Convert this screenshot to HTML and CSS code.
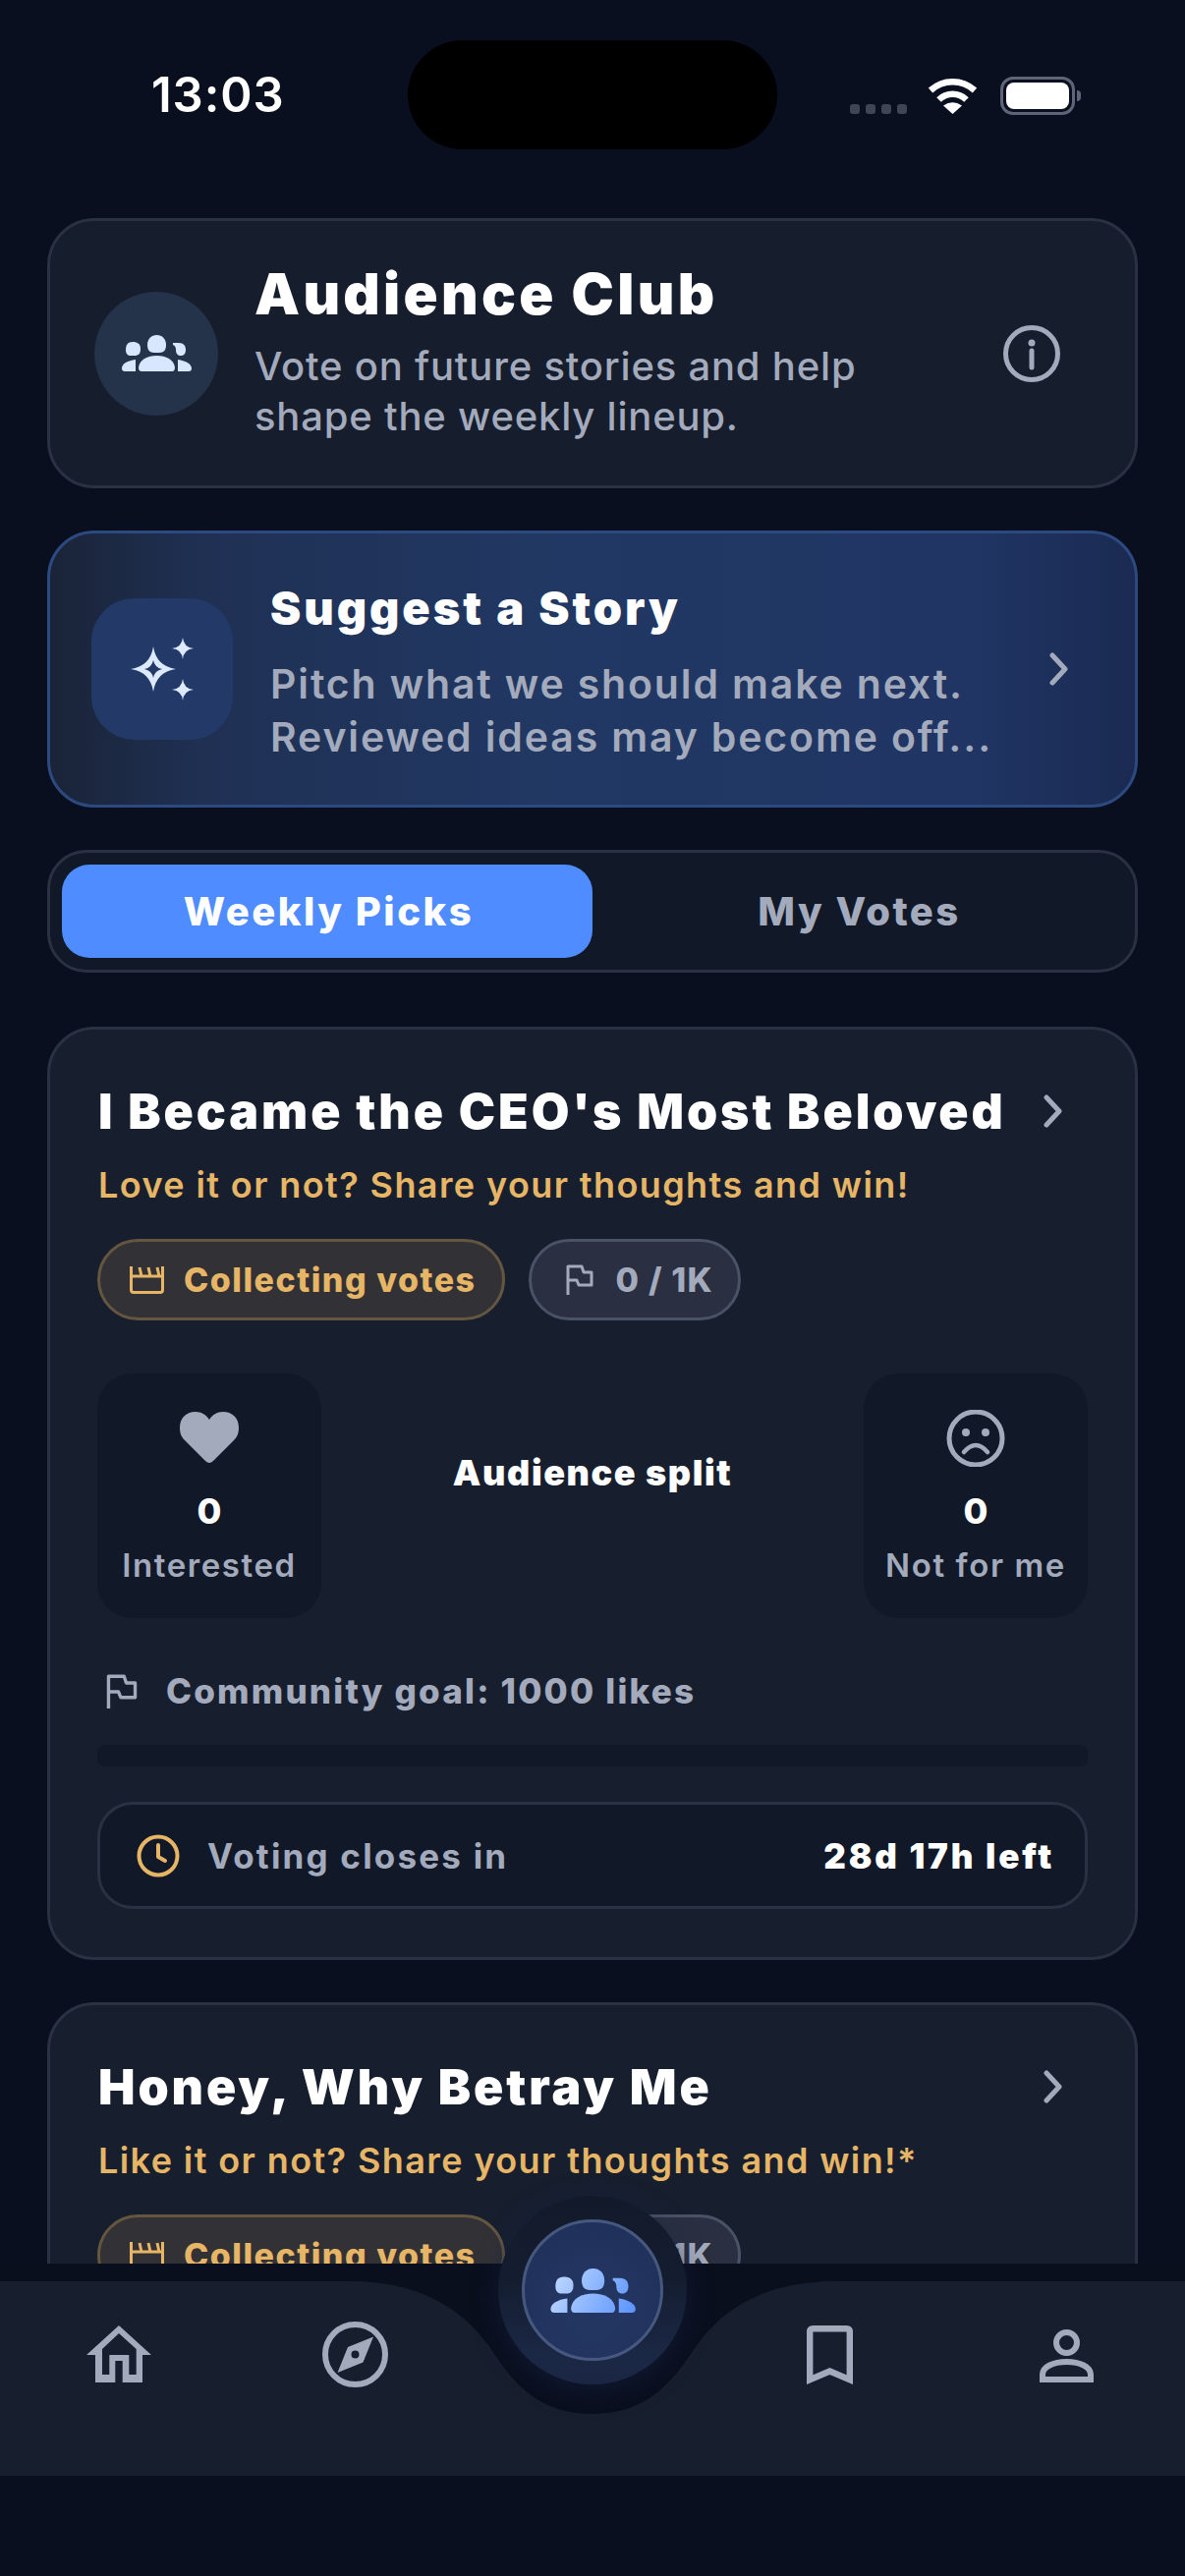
FILE: index.html
```html
<!DOCTYPE html>
<html lang="en">
<head>
  <meta charset="UTF-8" />
  <meta name="viewport" content="width=device-width, initial-scale=1" />
  <title>Audience Club</title>
  <link rel="stylesheet" href="styles.css">
</head>
<body>
  <svg class="defs" width="0" height="0" aria-hidden="true">
    <defs>
      <linearGradient id="people-glow" gradientUnits="userSpaceOnUse" x1="0" y1="0" x2="72" y2="36">
        <stop offset="0" stop-color="#c4dcff" />
        <stop offset="1" stop-color="#5b93ff" />
      </linearGradient>
      <symbol id="people" viewBox="0 0 72 37">
        <path d="M36.500 0C42 0 46 4 46 10C46 15 44 18 39 18H34C29 18 27 15 27 10C27 4 31 0 36.500 0Z" />
        <path d="M18 33C19 25 27 21 36.500 21C46 21 54 25 55 33C55 35.500 54 37 52 37H21C19 37 18 35.500 18 33Z" />
        <path d="M12 7C17 7 20 9 20 14C20 19 18 21 14 21H10C7 21 5 19 5 15C5 10 7 7 12 7Z" />
        <path d="M15 25V37H4C2 37 1 36 1 34C1 29 7 26 15 25Z" />
        <path d="M53 8H59C64 8 66 11 66 15C66 19 64 21 61 21C58 21 56 19 56 15C56 12.500 55 10.500 53 10Z" />
        <path d="M58 25C65 26 72 29 72 34C72 36 71 37 69 37H58Z" />
      </symbol>
      <symbol id="chevron" viewBox="0 0 20 34">
        <path d="M3 3L16 17L3 31" fill="none" stroke="currentColor" stroke-width="5" stroke-linecap="round" stroke-linejoin="round" />
      </symbol>
      <symbol id="clapper" viewBox="0 0 35 28">
        <path d="M1.500 0V24Q1.500 26.500 4 26.500H31Q33.500 26.500 33.500 24V0M1.500 10H33.500M10 1L12 10M19 1L21 10M28 1L30 10" fill="none" stroke="currentColor" stroke-width="3" />
      </symbol>
      <symbol id="flag" viewBox="0 0 28 31">
        <path d="M2 31V2H16L18 8H26V21H13L11 16H2" fill="none" stroke="currentColor" stroke-width="3" stroke-linejoin="round" />
      </symbol>
    </defs>
  </svg>

  <div class="phone">
    <div class="status">
      <span class="time">13:03</span>
      <div class="island"></div>
      <div class="status-icons">
        <div class="signal"><i></i><i></i><i></i><i></i></div>
        <svg class="wifi" viewBox="0 0 51 37">
          <path d="M3 13A33 33 0 0 1 48 13M11.500 22.500A20 20 0 0 1 39.500 22.500" fill="none" stroke="#fff" stroke-width="6.500" />
          <path d="M25.500 37L16 28.500Q25.500 22 35 28.500Z" fill="#fff" />
        </svg>
        <div class="battery"><div class="battery-fill"></div></div>
      </div>
    </div>

    <main class="feed">
      <section class="intro">
        <div class="avatar">
          <svg class="avatar-icon"><use href="#people" /></svg>
        </div>
        <div class="intro-text">
          <h1>Audience Club</h1>
          <p>Vote on future stories and help<br>shape the weekly lineup.</p>
        </div>
        <svg class="info" viewBox="0 0 58 58">
          <circle cx="29" cy="29" r="26.500" fill="none" stroke="currentColor" stroke-width="5" />
          <circle cx="29" cy="18" r="3.500" fill="currentColor" />
          <path d="M29 26V43" stroke="currentColor" stroke-width="5" stroke-linecap="round" />
        </svg>
      </section>

      <section class="suggest">
        <div class="suggest-icon">
          <svg class="sparkles" viewBox="0 0 60 60">
            <path fill-rule="evenodd" d="M21 7Q24 27 44 30Q24 33 21 53Q18 33 -2 30Q18 27 21 7ZM21 21Q19.500 28.500 12 30Q19.500 31.500 21 39Q22.500 31.500 30 30Q22.500 28.500 21 21Z" />
            <path d="M51 -2Q52 8 62 9Q52 10 51 20Q50 10 40 9Q50 8 51 -2Z" />
            <path d="M51 40Q52 50 62 51Q52 52 51 62Q50 52 40 51Q50 50 51 40Z" />
          </svg>
        </div>
        <div class="suggest-text">
          <h2>Suggest a Story</h2>
          <p>Pitch what we should make next.<br>Reviewed ideas may become off...</p>
        </div>
        <svg class="chevron suggest-chevron"><use href="#chevron" /></svg>
      </section>

      <div class="tabs">
        <button class="tab active">Weekly Picks</button>
        <button class="tab">My Votes</button>
      </div>

      <article class="card">
        <div class="card-title">
          <h3>I Became the CEO's Most Beloved</h3>
          <svg class="chevron"><use href="#chevron" /></svg>
        </div>
        <p class="card-sub">Love it or not? Share your thoughts and win!</p>
        <div class="pills">
          <span class="pill pill-gold"><svg class="clapper"><use href="#clapper" /></svg>Collecting votes</span>
          <span class="pill pill-grey"><svg class="flag"><use href="#flag" /></svg>0 / 1K</span>
        </div>

        <div class="split">
          <div class="vote">
            <svg class="vote-icon" viewBox="0 0 60 58">
              <path d="M30 54C28.500 54 27.500 53 26 52L5 31C1 27 0 23 0 18C0 8 7 2 16 2C22 2 27 5 30 10C33 5 38 2 44 2C53 2 60 8 60 18C60 23 59 27 55 31L34 52C32.500 53 31.500 54 30 54Z" fill="currentColor" />
            </svg>
            <span class="vote-num">0</span>
            <span class="vote-label">Interested</span>
          </div>
          <div class="split-title">Audience split</div>
          <div class="vote">
            <svg class="vote-icon" viewBox="0 0 60 58">
              <circle cx="30" cy="29" r="27" fill="none" stroke="currentColor" stroke-width="5" />
              <circle cx="20" cy="23" r="4" fill="currentColor" />
              <circle cx="40" cy="23" r="4" fill="currentColor" />
              <path d="M18 43Q30 29 42 43" fill="none" stroke="currentColor" stroke-width="4.500" stroke-linecap="round" />
            </svg>
            <span class="vote-num">0</span>
            <span class="vote-label">Not for me</span>
          </div>
        </div>

        <div class="goal">
          <svg class="goal-flag"><use href="#flag" /></svg>
          <span>Community goal: 1000 likes</span>
        </div>
        <div class="progress"></div>

        <div class="closes">
          <svg class="clock" viewBox="0 0 44 44">
            <circle cx="22" cy="22" r="19.500" fill="none" stroke="currentColor" stroke-width="4" />
            <path d="M22 11V23L29 27" fill="none" stroke="currentColor" stroke-width="4" stroke-linecap="round" stroke-linejoin="round" />
          </svg>
          <span class="closes-label">Voting closes in</span>
          <span class="closes-time">28d 17h left</span>
        </div>
      </article>

      <article class="card">
        <div class="card-title">
          <h3>Honey, Why Betray Me</h3>
          <svg class="chevron"><use href="#chevron" /></svg>
        </div>
        <p class="card-sub">Like it or not? Share your thoughts and win!*</p>
        <div class="pills">
          <span class="pill pill-gold"><svg class="clapper"><use href="#clapper" /></svg>Collecting votes</span>
          <span class="pill pill-grey"><svg class="flag"><use href="#flag" /></svg>0 / 1K</span>
        </div>
      </article>
    </main>

    <nav class="dock">
      <svg class="dock-shape" viewBox="0 0 1206 198" preserveAspectRatio="none">
        <path d="M0 0H355C420 0 465 22 497 65C520 100 545 135 603 135C661 135 686 100 709 65C741 22 786 0 851 0H1206V198H0Z" fill="#171f2f" />
      </svg>
      <a class="dock-item">
        <svg class="nav-home" viewBox="0 0 66 58">
          <path fill-rule="evenodd" fill="currentColor" d="M33 0L66 30H57V58H36.700V36H29.300V58H9V30H0ZM33 8L16 24V50H23.300V30H43.300V50H50.700V24Z" />
        </svg>
      </a>
      <a class="dock-item">
        <svg class="nav-compass" viewBox="0 0 67 67">
          <circle cx="33.500" cy="33.500" r="30.500" fill="none" stroke="currentColor" stroke-width="6" />
          <path fill-rule="evenodd" fill="currentColor" d="M52 15.500L41.500 41.500L15.500 52L26 26ZM33.500 29.500A4 4 0 1 0 33.500 37.500A4 4 0 1 0 33.500 29.500Z" />
        </svg>
      </a>
      <a class="dock-item dock-center">
        <span class="dock-halo"></span>
        <span class="dock-button">
          <svg class="dock-people"><use href="#people" /></svg>
        </span>
      </a>
      <a class="dock-item">
        <svg class="nav-bookmark" viewBox="0 0 47 60">
          <path d="M3.200 55.200V6.500Q3.200 3.200 6.500 3.200H40.500Q43.800 3.200 43.800 6.500V55.200L23.500 46.500Z" fill="none" stroke="currentColor" stroke-width="6.400" />
        </svg>
      </a>
      <a class="dock-item">
        <svg class="nav-person" viewBox="0 0 55 54">
          <circle cx="27.500" cy="13.500" r="10.500" fill="none" stroke="currentColor" stroke-width="6" />
          <path d="M3 51V46C3 38 14 33 27.500 33C41 33 52 38 52 46V51Z" fill="none" stroke="currentColor" stroke-width="6" />
        </svg>
      </a>
    </nav>
  </div>
</body>
</html>
```

FILE: styles.css
```css
* {
  margin: 0;
  padding: 0;
  box-sizing: border-box;
  font-family: 'Inter', sans-serif;
}
:root {
  --bg: #090f1f;
  --card: #171f2f;
  --well: #111827;
  --line: #2a3142;
  --muted: #a3aabc;
  --gold: #e6b566;
  --blue: #4f8cff;
}
body {
  background: var(--bg);
  color: #fff;
  width: 1206px;
  height: 2622px;
  overflow: hidden;
}
svg {
  display: block;
  flex-shrink: 0;
}
.defs {
  position: absolute;
}
.phone {
  height: 2622px;
  display: flex;
  flex-direction: column;
}

/* status bar */
.status {
  height: 222px;
  padding-top: 41px;
  display: grid;
  grid-template-columns: 1fr 376px 1fr;
  align-items: start;
  flex-shrink: 0;
}
.time {
  height: 111px;
  line-height: 111px;
  padding-left: 154px;
  font-size: 49px;
  font-weight: 600;
  letter-spacing: 0.900px;
}
.island {
  height: 111px;
  background: #000;
  border-radius: 56px;
}
.status-icons {
  display: flex;
  padding: 37px 0 0 74px;
  align-items: flex-start;
}
.signal {
  display: flex;
  gap: 6px;
  margin: 28px 0 0 0;
}
.signal i {
  width: 10px;
  height: 10px;
  border-radius: 3px;
  background: #3e4555;
}
.wifi {
  width: 51px;
  height: 37px;
  margin: 1px 0 0 21px;
}
.battery {
  position: relative;
  width: 76px;
  height: 39px;
  margin-left: 23px;
  border: 3px solid #5f6577;
  border-radius: 13px;
  padding: 3px;
}
.battery::after {
  content: '';
  position: absolute;
  right: -9px;
  top: 11px;
  width: 4px;
  height: 11px;
  background: #5f6577;
  border-radius: 0 4px 4px 0;
}
.battery-fill {
  height: 100%;
  background: #fff;
  border-radius: 8px;
}

/* scrolling column */
.feed {
  height: 2082px;
  flex-shrink: 0;
  overflow: hidden;
  padding: 0 48px;
  display: flex;
  flex-direction: column;
  gap: 43px;
}
.feed > * {
  flex-shrink: 0;
}

.intro {
  height: 275px;
  background: #161d2d;
  border: 3px solid var(--line);
  border-radius: 48px;
  padding-left: 45px;
  display: flex;
  align-items: center;
}
.avatar {
  width: 126px;
  height: 126px;
  border-radius: 50%;
  background: #24324a;
  display: flex;
  align-items: center;
  justify-content: center;
  flex-shrink: 0;
}
.avatar-icon {
  width: 72px;
  height: 37px;
  fill: #d8e6ff;
}
.intro-text {
  margin-left: 37px;
}
.intro-text h1 {
  font-size: 58px;
  line-height: 64px;
  font-weight: 900;
  letter-spacing: 3.300px;
  margin-top: -3px;
}
.intro-text p {
  margin-top: 16px;
  font-size: 40px;
  line-height: 51px;
  font-weight: 500;
  color: var(--muted);
  letter-spacing: 0.800px;
}
.info {
  width: 58px;
  height: 58px;
  margin-left: auto;
  margin-right: 76px;
  color: var(--muted);
}

.suggest {
  height: 282px;
  border: 3px solid #2d4a80;
  border-radius: 48px;
  background: linear-gradient(90deg, #1a2438 0%, #1f3053 14%, #213863 45%, #203564 85%, #1a2a52 100%);
  padding-left: 42px;
  display: flex;
  align-items: center;
  position: relative;
}
.suggest-icon {
  width: 144px;
  height: 144px;
  border-radius: 44px;
  background: #233a68;
  display: flex;
  align-items: center;
  justify-content: center;
}
.sparkles {
  width: 60px;
  height: 60px;
  fill: #dce9ff;
  overflow: visible;
}
.suggest-text {
  margin-left: 38px;
  padding-top: 3px;
}
.suggest-text h2 {
  font-size: 47px;
  line-height: 60px;
  font-weight: 900;
  letter-spacing: 2.900px;
}
.suggest-text p {
  margin-top: 20px;
  font-size: 41px;
  line-height: 54px;
  font-weight: 600;
  color: var(--muted);
  letter-spacing: 1.850px;
}
.chevron {
  width: 20px;
  height: 34px;
  color: var(--muted);
}
.suggest-chevron {
  margin-left: auto;
  margin-right: 67px;
}

.tabs {
  height: 125px;
  margin-bottom: 12px;
  border: 3px solid var(--line);
  border-radius: 40px;
  background: var(--well);
  padding: 12px;
  display: grid;
  grid-template-columns: 540px 1fr;
}
.tab {
  border: none;
  background: none;
  border-radius: 28px;
  padding-left: 3px;
  font-size: 40px;
  font-weight: 800;
  letter-spacing: 2.500px;
  color: var(--muted);
}
.tab.active {
  background: var(--blue);
  color: #fff;
}

.card {
  background: var(--card);
  border: 3px solid var(--line);
  border-radius: 48px;
  padding: 53px 48px 49px;
}
.card-title {
  display: flex;
  align-items: center;
  justify-content: space-between;
  padding-right: 25px;
}
.card-title h3 {
  margin-left: 1px;
  font-size: 50px;
  line-height: 60px;
  font-weight: 900;
  letter-spacing: 2.900px;
}
.card-sub {
  margin: 20px 0 0 1px;
  font-size: 36px;
  line-height: 50px;
  font-weight: 600;
  color: var(--gold);
  letter-spacing: 1.400px;
}
.pills {
  margin-top: 30px;
  display: flex;
  gap: 24px;
}
.pill {
  height: 83px;
  padding: 0 26px 0 30px;
  border: 3px solid;
  border-radius: 42px;
  display: flex;
  align-items: center;
  font-size: 34px;
  font-weight: 800;
  letter-spacing: 1.500px;
}
.pill-gold {
  background: #323236;
  border-color: #64563f;
  color: var(--gold);
}
.pill-grey {
  background: #2a3042;
  border-color: #4a5266;
  color: var(--muted);
  padding-right: 25px;
  letter-spacing: 1.200px;
}
.clapper {
  width: 35px;
  height: 28px;
  margin-right: 20px;
}
.flag {
  width: 28px;
  height: 31px;
  margin: 0 23px 0 5px;
}

.split {
  margin-top: 54px;
  display: grid;
  grid-template-columns: 228px 1fr 228px;
}
.vote {
  height: 249px;
  border-radius: 36px;
  background: var(--well);
  padding-top: 37px;
  display: flex;
  flex-direction: column;
  align-items: center;
}
.vote-icon {
  width: 60px;
  height: 58px;
  color: var(--muted);
}
.vote-num {
  margin-top: 23px;
  font-size: 36px;
  line-height: 44px;
  font-weight: 800;
}
.vote-label {
  margin-top: 13px;
  font-size: 33px;
  line-height: 40px;
  font-weight: 600;
  color: var(--muted);
  letter-spacing: 1.600px;
}
.split-title {
  padding-top: 79px;
  font-size: 36px;
  line-height: 44px;
  font-weight: 900;
  letter-spacing: 1.600px;
  text-align: center;
}

.goal {
  margin-top: 52px;
  padding-left: 9px;
  display: flex;
  align-items: center;
  font-size: 35px;
  line-height: 44px;
  font-weight: 800;
  color: var(--muted);
  letter-spacing: 2.200px;
}
.goal-flag {
  width: 32px;
  height: 35px;
  margin-right: 29px;
}
.progress {
  margin-top: 33px;
  height: 22px;
  border-radius: 8px;
  background: var(--well);
}
.closes {
  margin-top: 36px;
  height: 109px;
  border: 3px solid var(--line);
  border-radius: 36px;
  background: var(--well);
  padding: 0 31px 0 37px;
  display: flex;
  align-items: center;
  font-size: 35px;
}
.clock {
  width: 44px;
  height: 44px;
  color: var(--gold);
}
.closes-label {
  margin-left: 28px;
  font-weight: 700;
  letter-spacing: 2.200px;
  color: var(--muted);
}
.closes-time {
  margin-left: auto;
  font-weight: 900;
  letter-spacing: 2.800px;
}

/* bottom dock */
.dock {
  position: relative;
  height: 216px;
  flex-shrink: 0;
  background: #0a0f1e;
  display: grid;
  grid-template-columns: repeat(5, 1fr);
  color: var(--muted);
}
.dock-shape {
  position: absolute;
  left: 0;
  top: 18px;
  width: 1206px;
  height: 198px;
}
.dock-item {
  position: relative;
  height: 130px;
  padding-top: 59px;
  display: flex;
  justify-content: center;
}
.nav-home {
  width: 66px;
  height: 58px;
  margin-top: 4px;
}
.nav-compass {
  width: 67px;
  height: 67px;
}
.nav-bookmark {
  width: 47px;
  height: 60px;
  margin-top: 4px;
}
.nav-person {
  width: 55px;
  height: 54px;
  margin-top: 8px;
}
.dock-halo {
  position: absolute;
  left: 50%;
  top: -69px;
  width: 192px;
  height: 192px;
  margin-left: -96px;
  border-radius: 50%;
  background: linear-gradient(#121a2a 0%, #141d30 45%, #1b2845 85%, #1a2642 100%);
  box-shadow: 0 6px 26px rgba(22, 36, 72, 0.5);
}
.dock-button {
  position: absolute;
  left: 50%;
  top: -45px;
  width: 144px;
  height: 144px;
  margin-left: -72px;
  border-radius: 50%;
  border: 3px solid #47587f;
  background: radial-gradient(circle at 50% 65%, #243763 0%, #1f3059 100%);
  display: flex;
  align-items: center;
  justify-content: center;
}
.dock-people {
  width: 88px;
  height: 45px;
  fill: url(#people-glow);
}
```
